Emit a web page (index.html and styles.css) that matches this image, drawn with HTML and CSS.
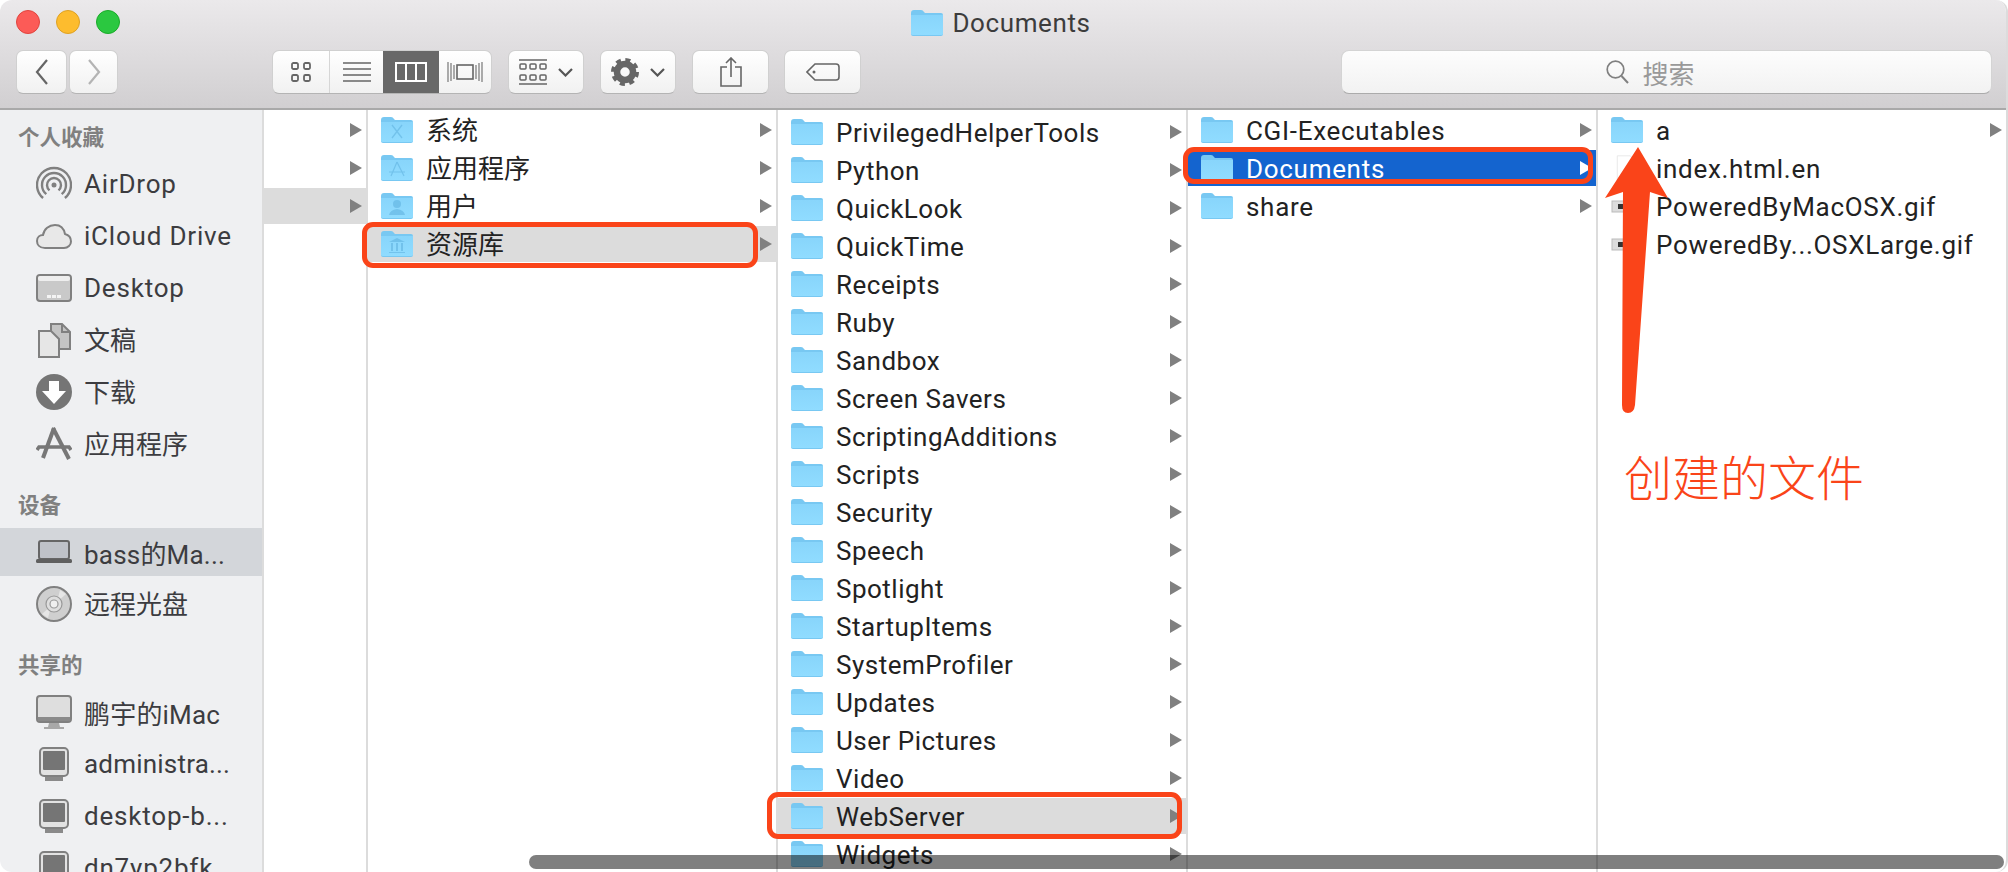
FILE: index.html
```html
<!DOCTYPE html>
<html lang="zh-CN">
<head>
  <meta charset="UTF-8">
  <title>Documents</title>
  <link rel="stylesheet" href="styles.css">
</head>
<body>
  <svg class="defs" width="0" height="0">
    <defs>
      <linearGradient id="folder-body" x1="0" y1="0" x2="0" y2="1">
        <stop offset="0" stop-color="#88d5fb"/>
        <stop offset="1" stop-color="#90dcff"/>
      </linearGradient>
      <symbol id="folder" viewBox="0 0 32 26">
        <path d="M0 3Q0 0 3 0H10Q12 0 13 2L14 3H30Q32 3 32 5V24Q32 26 30 26H2Q0 26 0 24Z" fill="#78c8f2"/>
        <path d="M0 5H32V24Q32 25 30 25H2Q0 25 0 24Z" fill="url(#folder-body)"/>
      </symbol>
      <symbol id="pc" viewBox="0 0 36 36">
        <rect x="4" y="2" width="28" height="28" rx="4" fill="#e2e2e2" stroke="#808080" stroke-width="2"/>
        <rect x="7" y="5" width="22" height="19" rx="1" fill="#757575"/>
        <rect x="9" y="31" width="18" height="4" fill="#8a8a8a"/>
      </symbol>
    </defs>
  </svg>

  <div class="window">
    <header class="toolbar">
      <div class="title-row">
        <div class="lights">
          <span class="light red"></span>
          <span class="light yellow"></span>
          <span class="light green"></span>
        </div>
        <div class="title"><svg class="folder"><use href="#folder"/></svg>Documents</div>
      </div>
      <div class="button-row">
        <div class="nav">
          <button class="btn back"><svg width="14" height="26" viewBox="0 0 14 26"><path d="M12 1L2 13L12 25" fill="none" stroke="#666" stroke-width="2.2"/></svg></button>
          <button class="btn forward"><svg width="14" height="26" viewBox="0 0 14 26"><path d="M2 1L12 13L2 25" fill="none" stroke="#b4b4b4" stroke-width="2.2"/></svg></button>
        </div>
        <div class="views">
          <span class="view icons"><svg width="20" height="20" viewBox="0 0 20 20"><g fill="none" stroke="#666" stroke-width="1.8"><rect x="1" y="1" width="6" height="6" rx="1.5"/><rect x="13" y="1" width="6" height="6" rx="1.5"/><rect x="1" y="13" width="6" height="6" rx="1.5"/><rect x="13" y="13" width="6" height="6" rx="1.5"/></g></svg></span>
          <span class="view list"><svg width="28" height="20" viewBox="0 0 28 20"><path d="M0 1H28M0 7H28M0 13H28M0 19H28" stroke="#666" stroke-width="1.6"/></svg></span>
          <span class="view columns"><svg width="32" height="20" viewBox="0 0 32 20"><path d="M1 1H31V19H1ZM11 1V19M21 1V19" fill="none" stroke="#fff" stroke-width="2"/></svg></span>
          <span class="view flow"><svg width="36" height="20" viewBox="0 0 36 20"><rect x="10" y="3" width="16" height="14" fill="none" stroke="#666" stroke-width="1.6"/><path d="M1 0V20M4 1V19M7 3V17M35 0V20M32 1V19M29 3V17" stroke="#777" stroke-width="1.2"/></svg></span>
        </div>
        <button class="btn tool"><svg width="28" height="26" viewBox="0 0 28 26"><path d="M0 1H28M0 25H28" stroke="#666" stroke-width="1.6"/><g fill="none" stroke="#666" stroke-width="1.5"><rect x="1" y="5" width="6" height="5" rx="1"/><rect x="11" y="5" width="6" height="5" rx="1"/><rect x="21" y="5" width="6" height="5" rx="1"/><rect x="1" y="16" width="6" height="5" rx="1"/><rect x="11" y="16" width="6" height="5" rx="1"/><rect x="21" y="16" width="6" height="5" rx="1"/></g></svg><svg class="caret" width="15" height="9" viewBox="0 0 15 9"><path d="M1 1L7.500 7.500L14 1" fill="none" stroke="#555" stroke-width="2.200"/></svg></button>
        <button class="btn tool"><svg width="28" height="28" viewBox="0 0 28 28"><circle cx="14" cy="14" r="8" fill="none" stroke="#666" stroke-width="6.500"/><circle cx="14" cy="14" r="12" fill="none" stroke="#666" stroke-width="4" stroke-dasharray="5 4.420"/></svg><svg class="caret" width="15" height="9" viewBox="0 0 15 9"><path d="M1 1L7.500 7.500L14 1" fill="none" stroke="#555" stroke-width="2.200"/></svg></button>
        <button class="btn plain"><svg width="22" height="30" viewBox="0 0 22 30"><path d="M7 10H1V29H21V10H15M11 20V1M6 6L11 1L16 6" fill="none" stroke="#666" stroke-width="1.600"/></svg></button>
        <button class="btn plain"><svg width="34" height="18" viewBox="0 0 34 18"><path d="M9 1H30Q33 1 33 4V14Q33 17 30 17H9L1 9Z" fill="none" stroke="#666" stroke-width="1.600"/><circle cx="8" cy="9" r="1.500" fill="#666"/></svg></button>
        <div class="search"><svg width="23" height="24" viewBox="0 0 23 24"><circle cx="9.500" cy="9.500" r="8.300" fill="none" stroke="#808080" stroke-width="1.700"/><path d="M15.500 16L22 23" stroke="#808080" stroke-width="2"/></svg>搜索</div>
      </div>
    </header>

    <div class="main">
      <nav class="sidebar">
        <h4 class="side-head">个人收藏</h4>
        <a class="side-row"><svg class="side-icon" viewBox="0 0 36 36"><g fill="none" stroke="#808080" stroke-width="2.400"><path d="M7.100 32A17 17 0 1 1 28.900 32"/><path d="M10.300 28.200A12 12 0 1 1 25.700 28.200"/><path d="M13.500 24.400A7 7 0 1 1 22.500 24.400"/></g><circle cx="18" cy="19" r="2.500" fill="#808080"/></svg><span>AirDrop</span></a>
        <a class="side-row"><svg class="side-icon" viewBox="0 0 36 36"><path d="M9 30C3 30 1 26 1 23C1 19 4 17 7 17C8 11 13 7 19 7C25 7 28 11 29 16C33 17 35 20 35 23.500C35 27 32 30 28 30Z" fill="#e8e8e8" stroke="#808080" stroke-width="2"/></svg><span>iCloud Drive</span></a>
        <a class="side-row"><svg class="side-icon" viewBox="0 0 36 36"><rect x="1" y="5" width="34" height="26" rx="3" fill="#c9c9c9" stroke="#808080" stroke-width="2"/><rect x="2" y="6" width="32" height="5" rx="2" fill="#eee"/><path d="M11 25h4v3h-4zM16 25h4v3h-4zM21 25h4v3h-4z" fill="#f4f4f4"/></svg><span>Desktop</span></a>
        <a class="side-row cjk"><svg class="side-icon" viewBox="0 0 36 36"><path d="M15 2H26L34 10V27H15Z" fill="#c4c4c4" stroke="#808080" stroke-width="2"/><path d="M3 9H15L23 17V35H3Z" fill="#e6e6e6" stroke="#808080" stroke-width="2"/><path d="M15 2V9M26 2V10H34" fill="none" stroke="#808080" stroke-width="2"/></svg><span>文稿</span></a>
        <a class="side-row cjk"><svg class="side-icon" viewBox="0 0 36 36"><circle cx="18" cy="18" r="18" fill="#757575"/><path d="M13 7H23V17H30L18 30L6 17H13Z" fill="#fff"/></svg><span>下载</span></a>
        <a class="side-row cjk"><svg class="side-icon" viewBox="0 0 36 36"><g stroke="#777" fill="none"><path d="M18 2L7 32" stroke-width="4"/><path d="M17 2L33 33" stroke-width="4"/><path d="M1 24L3 21H33L35 24" stroke-width="3.500"/></g></svg><span>应用程序</span></a>

        <h4 class="side-head">设备</h4>
        <a class="side-row selected tight"><svg class="side-icon" viewBox="0 0 36 36"><rect x="3" y="7" width="30" height="18" rx="2" fill="#bfc2c8" stroke="#666" stroke-width="2"/><rect x="0" y="25" width="36" height="4" rx="1.500" fill="#5f5f5f"/></svg><span>bass的Ma...</span></a>
        <a class="side-row cjk"><svg class="side-icon" viewBox="0 0 36 36"><circle cx="18" cy="18" r="17" fill="#cfcfcf" stroke="#808080" stroke-width="2"/><path d="M24 4L30 8L21 16ZM12 32L6 28L15 20Z" fill="#e6e6e6"/><circle cx="18" cy="18" r="8" fill="#dedede" stroke="#999" stroke-width="1.200"/><circle cx="18" cy="18" r="4" fill="#efefef" stroke="#999" stroke-width="1.200"/></svg><span>远程光盘</span></a>

        <h4 class="side-head">共享的</h4>
        <a class="side-row tight"><svg class="side-icon" viewBox="0 0 36 36"><rect x="1" y="2" width="34" height="26" rx="3" fill="#dedede" stroke="#808080" stroke-width="2"/><rect x="2" y="23" width="32" height="4" fill="#8a8a8a"/><path d="M13 29H23L24 33H28V35H8V33H12Z" fill="#a8a8a8"/></svg><span>鹏宇的iMac</span></a>
        <a class="side-row tight"><svg class="side-icon"><use href="#pc"/></svg><span>administra...</span></a>
        <a class="side-row"><svg class="side-icon"><use href="#pc"/></svg><span>desktop-b...</span></a>
        <a class="side-row"><svg class="side-icon"><use href="#pc"/></svg><span>dn7yp2bfk...</span></a>
      </nav>

      <section class="col col-first">
        <div class="row more"></div>
        <div class="row more"></div>
        <div class="row more open"></div>
      </section>

      <section class="col col-cjk">
        <div class="row more"><svg class="folder"><use href="#folder"/></svg><svg class="badge" viewBox="0 0 32 26"><path d="M11 8L21 21M21 8L11 21" stroke="#5db0de" stroke-width="1.300"/></svg><span>系统</span></div>
        <div class="row more"><svg class="folder"><use href="#folder"/></svg><svg class="badge" viewBox="0 0 32 26"><path d="M16 7L10 21M16 7L23 21M8 17H24" fill="none" stroke="#5db0de" stroke-width="1.200"/></svg><span>应用程序</span></div>
        <div class="row more"><svg class="folder"><use href="#folder"/></svg><svg class="badge" viewBox="0 0 32 26"><circle cx="16" cy="11" r="4" fill="#5db0de"/><path d="M8 22Q9 17 16 16Q23 17 24 22Z" fill="#5db0de"/></svg><span>用户</span></div>
        <div class="row more open"><svg class="folder"><use href="#folder"/></svg><svg class="badge" viewBox="0 0 32 26"><path d="M8 11L16 7L24 11ZM10 12h2v8h-2zM15 12h2v8h-2zM20 12h2v8h-2zM8 21H24V22H8Z" fill="#5db0de"/></svg><span>资源库</span></div>
      </section>

      <section class="col col-long">
        <div class="row more"><svg class="folder"><use href="#folder"/></svg><span>PrivilegedHelperTools</span></div>
        <div class="row more"><svg class="folder"><use href="#folder"/></svg><span>Python</span></div>
        <div class="row more"><svg class="folder"><use href="#folder"/></svg><span>QuickLook</span></div>
        <div class="row more"><svg class="folder"><use href="#folder"/></svg><span>QuickTime</span></div>
        <div class="row more"><svg class="folder"><use href="#folder"/></svg><span>Receipts</span></div>
        <div class="row more"><svg class="folder"><use href="#folder"/></svg><span>Ruby</span></div>
        <div class="row more"><svg class="folder"><use href="#folder"/></svg><span>Sandbox</span></div>
        <div class="row more"><svg class="folder"><use href="#folder"/></svg><span>Screen Savers</span></div>
        <div class="row more"><svg class="folder"><use href="#folder"/></svg><span>ScriptingAdditions</span></div>
        <div class="row more"><svg class="folder"><use href="#folder"/></svg><span>Scripts</span></div>
        <div class="row more"><svg class="folder"><use href="#folder"/></svg><span>Security</span></div>
        <div class="row more"><svg class="folder"><use href="#folder"/></svg><span>Speech</span></div>
        <div class="row more"><svg class="folder"><use href="#folder"/></svg><span>Spotlight</span></div>
        <div class="row more"><svg class="folder"><use href="#folder"/></svg><span>StartupItems</span></div>
        <div class="row more"><svg class="folder"><use href="#folder"/></svg><span>SystemProfiler</span></div>
        <div class="row more"><svg class="folder"><use href="#folder"/></svg><span>Updates</span></div>
        <div class="row more"><svg class="folder"><use href="#folder"/></svg><span>User Pictures</span></div>
        <div class="row more"><svg class="folder"><use href="#folder"/></svg><span>Video</span></div>
        <div class="row more open"><svg class="folder"><use href="#folder"/></svg><span>WebServer</span></div>
        <div class="row more"><svg class="folder"><use href="#folder"/></svg><span>Widgets</span></div>
      </section>

      <section class="col col-wide">
        <div class="row more"><svg class="folder"><use href="#folder"/></svg><span>CGI-Executables</span></div>
        <div class="row more active"><svg class="folder"><use href="#folder"/></svg><span>Documents</span></div>
        <div class="row more"><svg class="folder"><use href="#folder"/></svg><span>share</span></div>
      </section>

      <section class="col col-wide col-last">
        <div class="row more"><svg class="folder"><use href="#folder"/></svg><span>a</span></div>
        <div class="row"><svg class="folder" viewBox="0 0 32 32"><path d="M4 1H20L27 8V31H4Z" fill="#fff" stroke="#e4e4e4"/></svg><span>index.html.en</span></div>
        <div class="row"><svg class="folder" viewBox="0 0 32 26"><rect x="1" y="8" width="26" height="11" fill="#dcdcdc" stroke="#bbb"/><rect x="7" y="11" width="6" height="5" fill="#333"/></svg><span>PoweredByMacOSX.gif</span></div>
        <div class="row"><svg class="folder" viewBox="0 0 32 26"><rect x="1" y="8" width="26" height="11" fill="#dcdcdc" stroke="#bbb"/><rect x="7" y="11" width="6" height="5" fill="#333"/></svg><span>PoweredBy...OSXLarge.gif</span></div>
      </section>

      <div class="scrollbar"></div>
    </div>

    <div class="mark mark-library"></div>
    <div class="mark mark-webserver"></div>
    <div class="mark mark-documents"></div>
    <svg class="arrow" width="70" height="270" viewBox="0 0 70 270"><path d="M35 0L65 51L47 45L32 258Q31 266 25 266Q19 266 19 258L20 45L2 51Z" fill="#fa4419"/></svg>
    <div class="note">创建的文件</div>
  </div>
</body>
</html>
```

FILE: styles.css
```css
* {
  box-sizing: border-box;
}
html, body {
  margin: 0;
  height: 100%;
  background: #fff;
}
body {
  font-family: Roboto, "Noto Sans CJK SC", sans-serif;
  font-size: 26px;
  color: #222;
}
.defs {
  position: absolute;
}
.window {
  position: relative;
  height: 872px;
  overflow: hidden;
  border-right: 2px solid #dcdcdc;
  border-radius: 12px;
}

/* toolbar */
.toolbar {
  height: 110px;
  padding-top: 10px;
  background: linear-gradient(#ebe9eb, #d1cfd1);
  border-bottom: 2px solid #a9a9a9;
}
.title-row {
  display: grid;
  grid-template-columns: 1fr auto 1fr;
  height: 24px;
  margin-bottom: 16px;
}
.lights {
  display: flex;
  gap: 16px;
  padding-left: 16px;
}
.light {
  width: 24px;
  height: 24px;
  border-radius: 50%;
}
.light.red {
  background: #fc5b57;
  border: 1px solid #e0443e;
}
.light.yellow {
  background: #fdbc2e;
  border: 1px solid #dea123;
}
.light.green {
  background: #2bc840;
  border: 1px solid #1aab29;
}
.title {
  display: flex;
  align-items: center;
  gap: 9px;
  margin-right: 4px;
  font-size: 26px;
  letter-spacing: .6px;
  line-height: 24px;
  color: #3c3c3c;
}
.button-row {
  display: flex;
  height: 44px;
  padding: 0 14px 0 16px;
}
.btn {
  display: flex;
  align-items: center;
  justify-content: center;
  height: 44px;
  padding: 0;
  background: linear-gradient(#fff, #f1f1f1);
  border: 1px solid #d0d0d0;
  border-bottom-color: #b4b4b4;
  border-radius: 7px;
}
.nav {
  display: flex;
  gap: 2px;
  margin-right: 154px;
}
.back {
  width: 51px;
}
.forward {
  width: 49px;
}
.views {
  display: flex;
  width: 220px;
  height: 44px;
  margin-right: 16px;
  overflow: hidden;
  background: linear-gradient(#fff, #f1f1f1);
  border: 1px solid #d0d0d0;
  border-bottom-color: #b4b4b4;
  border-radius: 7px;
}
.view {
  display: flex;
  align-items: center;
  justify-content: center;
}
.view.icons {
  width: 57px;
  border-right: 1px solid #d6d6d6;
}
.view.list {
  width: 53px;
}
.view.columns {
  width: 56px;
  background: #686868;
}
.view.flow {
  flex: 1;
}
.tool {
  gap: 11px;
  width: 76px;
  margin-right: 16px;
}
.plain {
  width: 77px;
  margin-right: 15px;
}
.search {
  display: flex;
  align-items: center;
  justify-content: center;
  gap: 13px;
  width: 651px;
  height: 44px;
  margin-left: auto;
  padding-right: 32px;
  background: linear-gradient(#fdfdfd, #f2f2f2);
  border: 1px solid #d4d4d4;
  border-bottom-color: #ababab;
  border-radius: 8px;
  color: #999;
}

/* sidebar */
.main {
  position: relative;
  display: flex;
  height: 762px;
}
.sidebar {
  flex: none;
  width: 264px;
  padding-top: 14px;
  background: #eff0f2;
  border-right: 2px solid #dcdcdc;
}
.side-head {
  height: 28px;
  margin: 24px 0 8px;
  padding-left: 18px;
  font-size: 21.500px;
  font-weight: 700;
  line-height: 28px;
  color: #808080;
}
.side-head:first-child {
  margin-top: 0;
}
.side-row {
  display: flex;
  align-items: center;
  gap: 12px;
  height: 48px;
  margin-bottom: 4px;
  padding-left: 36px;
  letter-spacing: .8px;
  color: #3c3c40;
  white-space: nowrap;
}
.side-row.tight {
  letter-spacing: .2px;
}
.side-row.cjk {
  letter-spacing: 0;
}
.side-row.cjk span {
  margin-top: -4px;
}
.side-row.selected {
  background: #d3d6da;
}
.side-icon {
  flex: none;
  width: 36px;
  height: 36px;
}

/* columns */
.col {
  flex: none;
  width: 410px;
  padding-top: 2px;
  border-right: 2px solid #dcdcdc;
}
.col-first {
  width: 104px;
}
.col-long {
  padding-top: 4px;
}
.col-last {
  flex: 1;
  border-right: 0;
}
.row {
  position: relative;
  display: flex;
  align-items: center;
  height: 36px;
  margin-bottom: 2px;
  padding-left: 13px;
  white-space: nowrap;
}
.folder {
  flex: none;
  width: 32px;
  height: 26px;
}
.row span {
  margin-left: 13px;
  padding-top: 2px;
  letter-spacing: .5px;
}
.col-wide .row span {
  letter-spacing: .7px;
}
.col-cjk .row span {
  padding-top: 0;
  margin-top: -3px;
  letter-spacing: 0;
}
.badge {
  position: absolute;
  left: 13px;
  width: 32px;
  height: 26px;
  opacity: .55;
}
.row.more::after {
  content: "";
  position: absolute;
  right: 4px;
  top: 11px;
  border-left: 12px solid #808080;
  border-top: 7px solid transparent;
  border-bottom: 7px solid transparent;
}
.row.open {
  background: #dcdcdc;
}
.row.active {
  background: #1464cf;
  color: #fff;
}
.row.active::after {
  border-left-color: #fff;
}
.scrollbar {
  position: absolute;
  left: 529px;
  right: 2px;
  top: 745px;
  height: 14px;
  background: rgba(0, 0, 0, .5);
  border-radius: 7px;
}

/* hand-drawn marks on top of the screenshot */
.mark {
  position: absolute;
  border: 5px solid #fa4419;
  border-radius: 11px;
}
.mark-library {
  left: 362px;
  top: 222px;
  width: 396px;
  height: 46px;
}
.mark-webserver {
  left: 767px;
  top: 792px;
  width: 415px;
  height: 47px;
}
.mark-documents {
  left: 1183px;
  top: 147px;
  width: 410px;
  height: 37px;
}
.arrow {
  position: absolute;
  left: 1603px;
  top: 147px;
}
.note {
  position: absolute;
  left: 1624px;
  top: 448px;
  font-size: 48px;
  font-weight: 300;
  line-height: 64px;
  color: #fa4419;
}
```
